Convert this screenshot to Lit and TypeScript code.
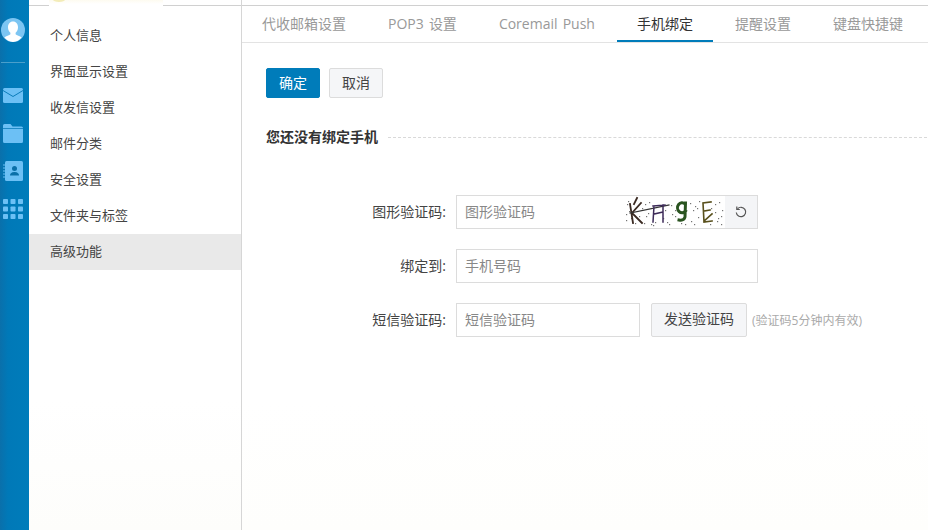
import { LitElement, html, css, svg } from "lit";
import { customElement } from "lit/decorators.js";

@customElement("app-root")
export class AppRoot extends LitElement {
  static styles = css`
    :host { display: block; width: 928px; height: 530px; overflow: hidden; background: #fff; font-family: "Open Sans", "Noto Sans CJK SC", "Liberation Sans", sans-serif; font-size: 14px; color: #333; }
    .page { display: flex; height: 530px; }
    .rail { width: 29px; flex: none; background: linear-gradient(90deg, #0a70ab 0, #0079b8 8px, #007cba 100%); display: flex; flex-direction: column; align-items: center; padding: 18px 3px 0 0; box-sizing: border-box; overflow: hidden; }
    .rail svg { display: block; flex: none; }
    .rail-sep { width: 24px; height: 1px; background: #4a9fcb; margin: 20px 0 25px; flex: none; }
    .folder { margin-top: 21px; }
    .book { margin-top: 18px; }
    .apps { margin-top: 18px; }
    .side { width: 213px; flex: none; box-sizing: border-box; border-right: 1px solid #d6d6d6; display: flex; flex-direction: column; padding-top: 18px; background: linear-gradient(180deg, #fff 0, #fff 400px, #fdfdfb 100%); position: relative; font-size: 13px; }
    .top-line { position: absolute; top: 5px; left: 0; right: 0; height: 1px; background: #d0d0d0; }
    .top-gap { position: absolute; top: 0; left: 20px; width: 114px; height: 6px; background: linear-gradient(180deg, #fdfbf0 0, #fff 4px); }
    .top-spot { position: absolute; top: -3px; left: 24px; width: 12px; height: 5px; border-radius: 50%; background: #f3ecb8; }
    .nav { height: 36px; line-height: 35px; padding-left: 21px; color: #444; }
    .nav.on { background: #e9e9e9; }
    .main { flex: 1; min-width: 0; display: flex; flex-direction: column; background: linear-gradient(180deg, #fff 0, #fff 400px, #fefefc 100%); }
    .tabs { margin-top: 5px; border-top: 1px solid #d0d0d0; border-bottom: 1px solid #e3e3e3; height: 36px; display: flex; padding-left: 20px; gap: 42px; color: #999; white-space: nowrap; word-spacing: 1.5px; }
    .tab { height: 36px; line-height: 36px; }
    .tab.on { color: #333; border-bottom: 2px solid #007cba; margin: 0 -20px; padding: 0 20px; height: 34px; }
    .body { padding: 25px 0 0 24px; }
    .actions { display: flex; gap: 9px; }
    .btn { box-sizing: border-box; height: 30px; padding: 0 12px; line-height: 28px; border: 1px solid #dcdcdc; border-radius: 2px; background: #f5f6f8; color: #444; text-align: center; }
    .btn.pri { background: #007cba; border-color: #007cba; color: #fff; width: 54px; padding: 0; }
    .divider { display: flex; align-items: center; gap: 10px; margin-top: 29px; font-weight: 700; color: #333; height: 18px; }
    .divider i { flex: 1; border-top: 1px dashed #d9d9d9; margin: 2px 1px 0 0; }
    .form { margin-top: 50px; display: flex; flex-direction: column; gap: 20px; }
    .row { display: flex; align-items: center; height: 34px; }
    .label { width: 180px; margin-right: 10px; padding-bottom: 2px; text-align: right; color: #444; flex: none; }
    .field { box-sizing: border-box; height: 34px; border: 1px solid #dcdcdc; background: #fff; color: #888; line-height: 31px; padding-left: 8px; flex: none; }
    .wide { width: 302px; }
    .captcha { display: flex; padding-left: 0; }
    .captcha .ph { flex: 1; padding-left: 8px; }
    .captcha svg { display: block; flex: none; }
    .noise { filter: blur(0.45px); }
    .refresh { width: 32px; background: #f4f5f7; display: flex; align-items: center; justify-content: center; }
    .narrow { width: 184px; }
    .send { margin-left: 11px; height: 34px; width: 96px; padding: 0; line-height: 29px; }
    .hint { margin-left: 5px; font-size: 12px; color: #aaa; }
  `;

  private captcha() {
    const dots = [[2,8],[3,5],[1,24],[4,15],[6,22],[10,27],[14,20],[17,12],[19,27],[21,20],[24,6],[23,17],[26,28],[30,26],[36,9],[38,22],[44,28],[46,9],[47,18],[50,14],[50,20],[56,27],[65,7],[66,25],[68,14],[70,10],[69,28],[72,12],[73,21],[74,5],[90,8],[92,25],[90,16],[93,22],[94,6],[96,28],[97,14],[40,14],[60,28],[28,29],[86,12],[85,28],[1,18],[96,20],[42,26],[20,8]];
    return html`<svg width="100" height="32" viewBox="0 0 100 32" aria-hidden="true" class="noise">
      ${dots.map(([x, y]) => svg`<rect x=${x} y=${y} width="1.2" height="1.2" fill="#444" opacity=".75"></rect>`)}
      <g fill="none" stroke-linecap="square">
        <path d="M5 8 L8 27 M16 7 L7 17 L17 27 M12 2 L9 8" stroke="#3a2a22" stroke-width="1.8"></path>
        <path d="M5 17 L44 9" stroke="#333" stroke-width="1.1"></path>
        <path d="M29 10 L28 26 M38 9 L38 26 M29 18 L38 16 M28 10 L40 9" stroke="#3c2a58" stroke-width="1.5"></path>
        <path d="M60 8 a4.500 5 0 1 0 .5 7 M60.500 7 L60 21 Q59 25 54 24" stroke="#2a5420" stroke-width="3"></path>
        <path d="M86 6 L78 7 L79 26 L87 25 M79 15 L85 14 M79 25 L87 18" stroke="#59501c" stroke-width="1.6"></path>
      </g>
    </svg>`;
  }

  render() {
    const navs = ["个人信息", "界面显示设置", "收发信设置", "邮件分类", "安全设置", "文件夹与标签", "高级功能"];
    const tabs = ["代收邮箱设置", "POP3 设置", "Coremail Push", "手机绑定", "提醒设置", "键盘快捷键"];
    return html`<div class="page">
      <div class="rail">
        <svg width="24" height="24" viewBox="0 0 24 24">
          <circle cx="12" cy="12" r="12" fill="#7cc5f2"></circle>
          <path d="M12 3.500c3.200 0 5 2.600 5 5.700 0 2.500-1 4.300-2.400 5.500v1.500c.8 1 4.600 1.800 6 3.400A12 12 0 0 1 12 24a12 12 0 0 1-8.600-4.400c1.400-1.600 5.200-2.400 6-3.400v-1.500C8 13.500 7 11.700 7 9.200 7 6.100 8.800 3.500 12 3.500z" fill="#fff"></path>
        </svg>
        <div class="rail-sep"></div>
        <svg width="20" height="15" viewBox="0 0 20 15"><rect width="20" height="15" rx="1.500" fill="#6cc0f5"></rect><path d="M0 2.500l10 6 10-6" fill="none" stroke="#0a7cba" stroke-width="1"></path></svg>
        <svg class="folder" width="20" height="19" viewBox="0 0 20 19"><path d="M0 1.500A1.500 1.500 0 0 1 1.500 0h6L9.500 2.500H18.500A1.500 1.500 0 0 1 20 4v13.500A1.500 1.500 0 0 1 18.500 19h-17A1.500 1.500 0 0 1 0 17.500z" fill="#6cc0f5"></path><path d="M0 4.500h20" stroke="#0a7cba" stroke-width=".8"></path></svg>
        <svg class="book" width="20" height="20" viewBox="0 0 20 20"><rect x="2" width="18" height="20" rx="1.500" fill="#6cc0f5"></rect><circle cx="11.500" cy="7.500" r="2.500" fill="#0a6fa8"></circle><path d="M7 14.500c0-2.800 2.800-3.500 4.500-3.500s4.500.7 4.500 3.500z" fill="#0a6fa8"></path><path d="M0 4h4M0 7h4M0 10h4M0 13h4M0 16h4" stroke="#6cc0f5" stroke-width="1.200"></path></svg>
        <svg class="apps" width="20" height="20" viewBox="0 0 20 20" fill="#6cc0f5">
          ${[0, 7.5, 15].map((y) => [0, 7.5, 15].map((x) => svg`<rect x=${x} y=${y} width="5" height="5" rx=".8"></rect>`))}
        </svg>
      </div>
      <div class="side">
        <div class="top-line"></div><div class="top-gap"></div><div class="top-spot"></div>
        ${navs.map((n, i) => html`<div class="nav ${i === 6 ? "on" : ""}">${n}</div>`)}
      </div>
      <div class="main">
        <div class="tabs">
          ${tabs.map((t, i) => html`<div class="tab ${i === 3 ? "on" : ""}">${t}</div>`)}
        </div>
        <div class="body">
          <div class="actions">
            <div class="btn pri">确定</div>
            <div class="btn">取消</div>
          </div>
          <div class="divider"><span>您还没有绑定手机</span><i></i></div>
          <div class="form">
            <div class="row"><div class="label">图形验证码:</div>
              <div class="field wide captcha"><div class="ph">图形验证码</div>${this.captcha()}<div class="refresh">
                <svg width="14" height="14" viewBox="0 0 14 14" fill="none"><path d="M3.500 3.800A4.700 4.700 0 1 1 2.300 7.500" stroke="#555" stroke-width="1.200"></path><path d="M2.800 1.500v3h3" stroke="#555" stroke-width="1.200" fill="none"></path></svg>
              </div></div></div>
            <div class="row"><div class="label">绑定到:</div><div class="field wide">手机号码</div></div>
            <div class="row"><div class="label">短信验证码:</div><div class="field narrow">短信验证码</div><div class="btn send">发送验证码</div><span class="hint">(验证码5分钟内有效)</span></div>
          </div>
        </div>
      </div>
    </div>`;
  }
}
